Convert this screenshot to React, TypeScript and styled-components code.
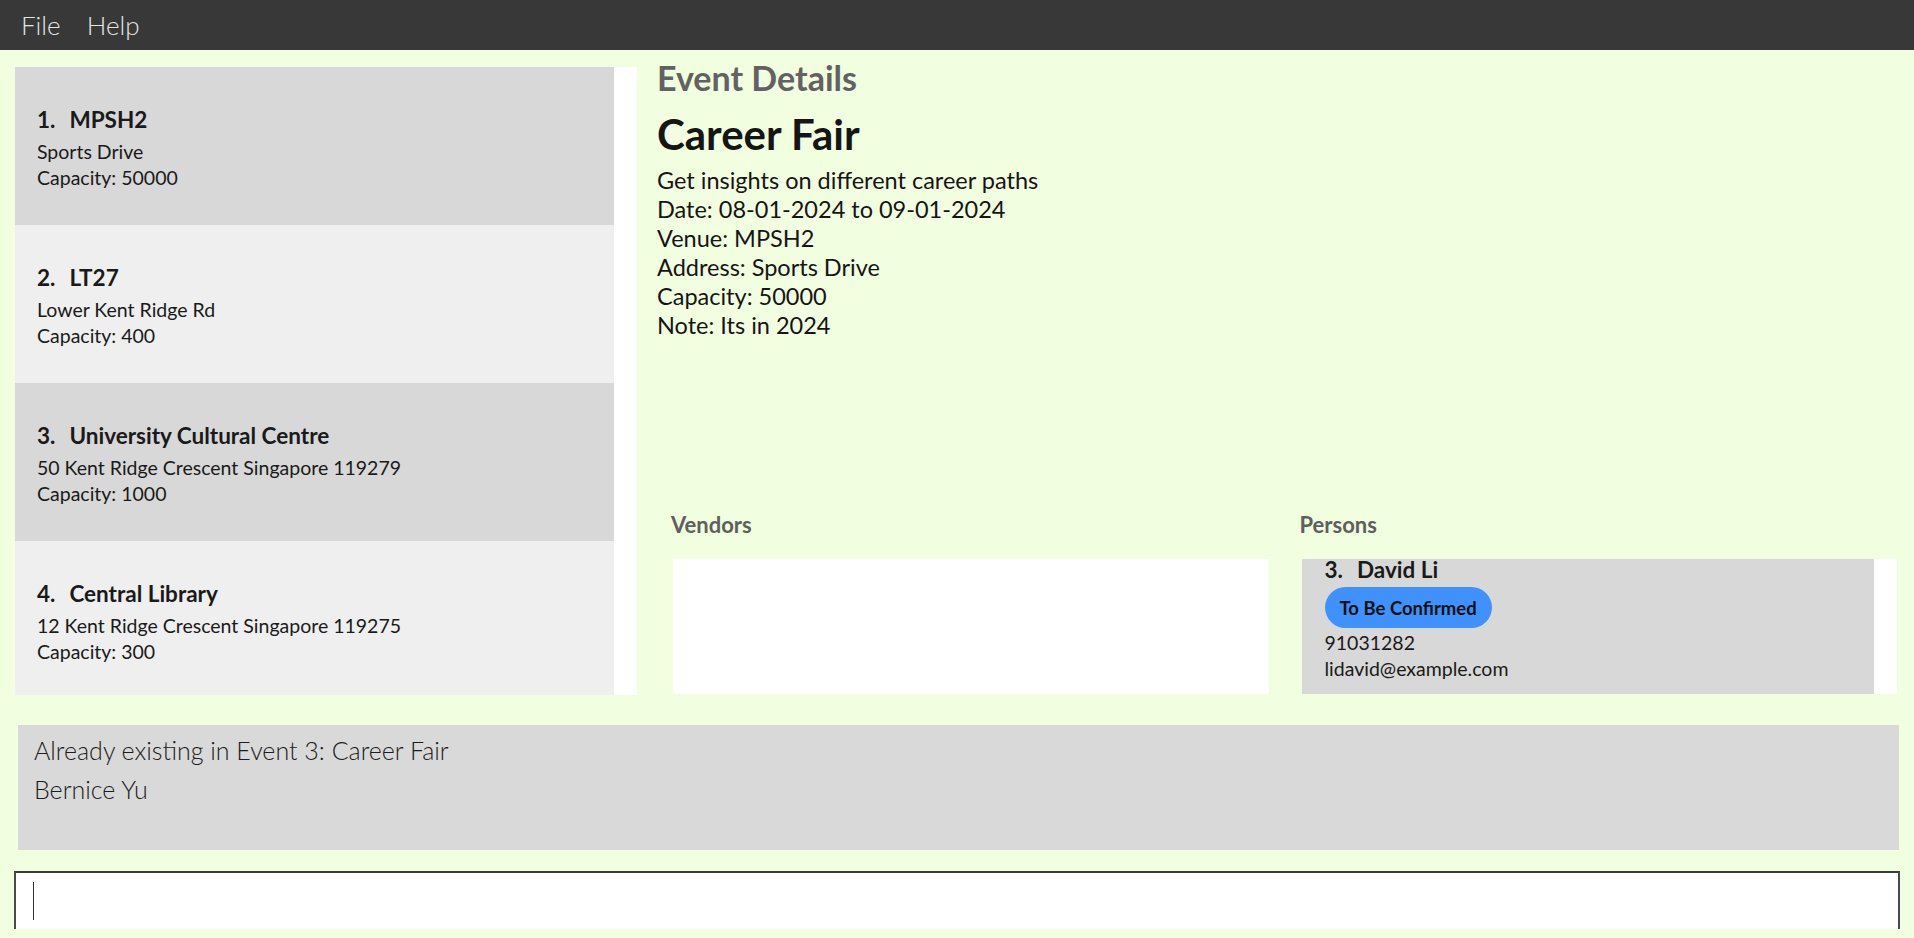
import styled, { createGlobalStyle } from 'styled-components';

const GlobalStyle = createGlobalStyle`
  html, body {
    margin: 0;
    padding: 0;
    background: #f1fedf;
    font-family: Lato, "Open Sans", sans-serif;
    overflow: hidden;
  }
  * { box-sizing: border-box; }
`;

const venues = [
  { name: 'MPSH2', address: 'Sports Drive', capacity: 50000 },
  { name: 'LT27', address: 'Lower Kent Ridge Rd', capacity: 400 },
  { name: 'University Cultural Centre', address: '50 Kent Ridge Crescent Singapore 119279', capacity: 1000 },
  { name: 'Central Library', address: '12 Kent Ridge Crescent Singapore 119275', capacity: 300 },
];

const details = [
  'Get insights on different career paths',
  'Date: 08-01-2024 to 09-01-2024',
  'Venue: MPSH2',
  'Address: Sports Drive',
  'Capacity: 50000',
  'Note: Its in 2024',
];

export const App = () => {
  return (
    <Frame>
      <GlobalStyle />
      <MenuBar>
        <MenuItem>File</MenuItem>
        <MenuItem>Help</MenuItem>
      </MenuBar>

      <Main>
        <VenueList>
          {venues.map((v, i) => (
            <VenueCell key={v.name} shaded={i % 2 === 0}>
              <CellTitle>
                <span>{i + 1}.</span>
                <span>{v.name}</span>
              </CellTitle>
              <CellLine>{v.address}</CellLine>
              <CellLine>Capacity: {v.capacity}</CellLine>
            </VenueCell>
          ))}
        </VenueList>

        <DetailPane>
          <PaneHeading>Event Details</PaneHeading>
          <EventName>Career Fair</EventName>
          {details.map((d) => (
            <DetailLine key={d}>{d}</DetailLine>
          ))}

          <ListsRow>
            <ListColumn>
              <ListLabel>Vendors</ListLabel>
              <ListBox />
            </ListColumn>
            <ListColumn>
              <ListLabel>Persons</ListLabel>
              <ListBox>
                <PersonCard>
                  <PersonName>
                    <span>3.</span>
                    <span>David Li</span>
                  </PersonName>
                  <StatusBadge>To Be Confirmed</StatusBadge>
                  <CellLine>91031282</CellLine>
                  <CellLine>lidavid@example.com</CellLine>
                </PersonCard>
              </ListBox>
            </ListColumn>
          </ListsRow>
        </DetailPane>
      </Main>

      <ResultBox>
        <ResultLine>Already existing in Event 3: Career Fair</ResultLine>
        <ResultLine>Bernice Yu</ResultLine>
      </ResultBox>

      <CommandWrap>
        <CommandBox>
          <Caret />
        </CommandBox>
      </CommandWrap>
    </Frame>
  );
};

const Frame = styled.div`
  width: 1914px;
  height: 938px;
  display: flex;
  flex-direction: column;
`;

const MenuBar = styled.div`
  height: 50px;
  background: #383838;
  display: flex;
  align-items: center;
  gap: 26px;
  padding-left: 21px;
  flex-shrink: 0;
`;

const MenuItem = styled.span`
  font-size: 26px;
  font-weight: 300;
  color: #e4e4e4;
`;

const Main = styled.div`
  height: 660px;
  display: flex;
  padding: 0 14px 0 15px;
  flex-shrink: 0;
`;

const VenueList = styled.div`
  margin-top: 17px;
  width: 622px;
  height: 628px;
  background: #ffffff;
  display: flex;
  flex-direction: column;
  overflow: hidden;
  flex-shrink: 0;
`;

const VenueCell = styled.div<{ shaded: boolean }>`
  width: 599px;
  height: 158px;
  flex-shrink: 0;
  padding-left: 22px;
  padding-top: 3px;
  display: flex;
  flex-direction: column;
  justify-content: center;
  background: ${({ shaded }) => (shaded ? '#d8d8d8' : '#efefef')};
`;

const CellTitle = styled.div`
  display: flex;
  gap: 14px;
  font-size: 22.5px;
  font-weight: 700;
  color: #1a1a1a;
  line-height: 30px;
  margin-bottom: 4px;
`;

const CellLine = styled.div`
  font-size: 19.5px;
  color: #1a1a1a;
  line-height: 26px;
`;

const DetailPane = styled.div`
  flex: 1;
  margin-left: 20px;
  display: flex;
  flex-direction: column;
  padding-bottom: 16px;
`;

const PaneHeading = styled.div`
  margin-top: 8px;
  font-size: 34px;
  line-height: 40px;
  font-weight: 700;
  color: #626262;
`;

const EventName = styled.div`
  margin-top: 12px;
  margin-bottom: 8px;
  font-size: 42px;
  line-height: 48px;
  font-weight: 700;
  color: #151515;
`;

const DetailLine = styled.div`
  font-size: 23.5px;
  line-height: 29px;
  color: #151515;
`;

const ListsRow = styled.div`
  margin-top: auto;
  margin-left: 16px;
  margin-right: 3px;
  display: grid;
  grid-template-columns: 1fr 1fr;
  column-gap: 33px;
`;

const ListColumn = styled.div`
  display: flex;
  flex-direction: column;
`;

const ListLabel = styled.div`
  font-size: 22px;
  line-height: 24px;
  font-weight: 700;
  color: #5f5f5f;
  margin-left: -2px;
  margin-bottom: 22px;
`;

const ListBox = styled.div`
  height: 135px;
  background: #ffffff;
  overflow: hidden;
`;

const PersonCard = styled.div`
  width: calc(100% - 23px);
  height: 140px;
  padding-left: 23px;
  background: #d8d8d8;
`;

const PersonName = styled.div`
  display: flex;
  gap: 14px;
  font-size: 22.5px;
  line-height: 22px;
  font-weight: 700;
  color: #1a1a1a;
`;

const StatusBadge = styled.div`
  display: inline-flex;
  align-items: center;
  height: 41px;
  margin: 6px 0 2px;
  padding: 0 15px;
  border-radius: 21px;
  background: #3f92fc;
  color: #111111;
  font-size: 18.5px;
  font-weight: 700;
`;

const ResultBox = styled.div`
  margin: 15px 15px 0 18px;
  height: 125px;
  background: #d9d9d9;
  padding: 6px 16px;
  flex-shrink: 0;
`;

const ResultLine = styled.div`
  font-size: 25px;
  line-height: 39px;
  font-weight: 300;
  color: #1c1c1c;
`;

const CommandWrap = styled.div`
  margin: 21px 14px 0 14px;
  height: 58px;
  overflow: hidden;
  flex-shrink: 0;
`;

const CommandBox = styled.div`
  height: 70px;
  background: #ffffff;
  border: 2px solid #4a4a4a;
  border-top-color: #3a3a3a;
  padding: 9px 0 0 17px;
`;

const Caret = styled.div`
  width: 1px;
  height: 38px;
  background: #333333;
`;

export default App;
